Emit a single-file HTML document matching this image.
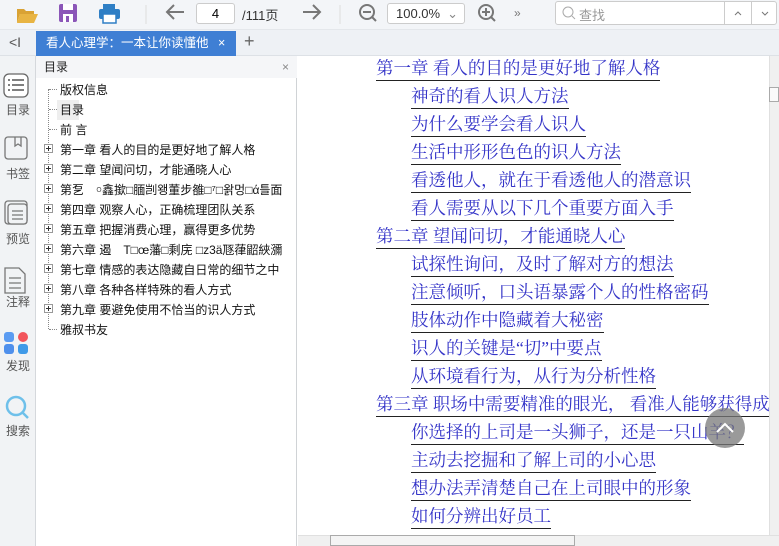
<!DOCTYPE html>
<html><head><meta charset="utf-8"><style>
*{margin:0;padding:0;box-sizing:border-box}
body{width:779px;height:546px;overflow:hidden;background:#fff;font-family:"Liberation Sans","Noto Sans CJK SC",sans-serif;position:relative}
.tb{position:absolute;left:0;top:0;width:779px;height:30px;background:#f3f5f8;border-bottom:1px solid #e4e7eb}
.tabs{position:absolute;left:0;top:30px;width:779px;height:26px;background:#eef1f5;border-bottom:1px solid #dde1e6}
.side{position:absolute;left:0;top:56px;width:36px;height:490px;background:#f1f3f5;border-right:1px solid #d5d8dc}
.toc{position:absolute;left:36px;top:56px;width:261px;height:490px;background:#fff;border-right:1px solid #d0d3d6}
.sl{position:absolute;left:0;width:36px;text-align:center;font-size:12px;color:#555}
.ti{position:absolute;left:24px;font-size:12px;color:#111;white-space:nowrap}
.pl{position:absolute;left:8px;width:9px;height:9px;border:1px solid #999;background:#fff}
.pl:before{content:"";position:absolute;left:1px;top:3px;width:5px;height:1px;background:#333}
.pl:after{content:"";position:absolute;left:3px;top:1px;width:1px;height:5px;background:#333}
.dh{position:absolute;border-top:1px dotted #888;width:8px}
.m{position:absolute;font-family:"Liberation Serif","Noto Serif CJK SC",serif;font-size:17.5px;color:#3535c8;white-space:nowrap;border-bottom:1px solid #222;line-height:22px;padding-bottom:1px}
</style></head><body>
<div class="tb">
<svg width="779" height="30" style="position:absolute;left:0;top:0">
<path d="M17 9h7l2 2h8v3H20l-3 9z" fill="#d9a234"/><path d="M20 14h18l-4 9H17z" fill="#e8b443"/>
<rect x="59" y="4" width="18" height="18" rx="2" fill="#8b56b8"/><rect x="63" y="4" width="10" height="6" fill="#fff"/><rect x="63" y="14" width="10" height="8" fill="#fff"/><rect x="66" y="16" width="3" height="6" fill="#8b56b8"/>
<rect x="103" y="4" width="12" height="5" fill="#2f7fc5"/><rect x="99" y="9" width="21" height="10" rx="2" fill="#2f7fc5"/><rect x="103" y="14" width="13" height="9" fill="#fff" stroke="#2f7fc5" stroke-width="1.5"/>
<line x1="146" y1="5" x2="146" y2="24" stroke="#ddd"/>
<path d="M184 12H168M174 5l-7 7 7 7" stroke="#777" stroke-width="2" fill="none"/>
<path d="M303 12h16M313 5l7 7-7 7" stroke="#777" stroke-width="2" fill="none"/>
<line x1="340" y1="5" x2="340" y2="24" stroke="#ddd"/>
<circle cx="367" cy="12" r="7" stroke="#777" stroke-width="2" fill="none"/><line x1="363" y1="12" x2="371" y2="12" stroke="#777" stroke-width="2"/><line x1="372" y1="17" x2="376" y2="21" stroke="#777" stroke-width="2"/>
<circle cx="486" cy="12" r="7" stroke="#777" stroke-width="2" fill="none"/><path d="M482 12h8M486 8v8" stroke="#777" stroke-width="2"/><line x1="491" y1="17" x2="495" y2="21" stroke="#777" stroke-width="2"/>
<text x="514" y="17" font-size="12" fill="#777">»</text>
</svg>
<div style="position:absolute;left:196px;top:3px;width:39px;height:21px;border:1px solid #ccc;border-radius:3px;background:#fff;font-size:13px;text-align:center;line-height:19px">4</div>
<div style="position:absolute;left:242px;top:5px;font-size:13px;color:#333">/111页</div>
<div style="position:absolute;left:387px;top:3px;width:78px;height:21px;border:1px solid #ccc;border-radius:3px;background:#fff;font-size:13px;line-height:19px;padding-left:8px;color:#333">100.0%<span style="position:absolute;right:6px;color:#888">⌄</span></div>
<div style="position:absolute;left:555px;top:1px;width:222px;height:24px;border:1px solid #ccc;border-radius:3px;background:#fff">
<svg width="222" height="22" style="position:absolute;left:0;top:0"><circle cx="12" cy="10" r="5" stroke="#aaa" fill="none"/><line x1="16" y1="14" x2="19" y2="17" stroke="#aaa"/><path d="M179 13l3-3 3 3M206 10l3 3 3-3" stroke="#777" fill="none"/></svg>
<span style="position:absolute;left:23px;top:3px;font-size:13px;color:#999">查找</span><div style="position:absolute;left:168px;top:0;width:1px;height:22px;background:#ccc"></div><div style="position:absolute;left:195px;top:0;width:1px;height:22px;background:#ccc"></div></div>
</div>
<div class="tabs">
<div style="position:absolute;left:9px;top:4px;font-size:14px;color:#555">&lt;I</div>
<div style="position:absolute;left:36px;top:1px;width:200px;height:25px;background:#3f7fd4;color:#fff;font-size:12.5px;line-height:25px;padding-left:10px;white-space:nowrap;overflow:hidden">看人心理学：一本让你读懂他人<span style="position:absolute;left:172px;top:0;width:28px;height:25px;background:#3f7fd4"></span><span style="position:absolute;left:182px">×</span></div>
<div style="position:absolute;left:244px;top:1px;font-size:18px;color:#666">+</div>
</div>
<div class="side">
<svg width="36" height="400" style="position:absolute;left:0;top:0">
<rect x="4" y="18" width="24" height="23" rx="5" fill="#fff" stroke="#666" stroke-width="1.3"/><path d="M8 24h2M12 24h12M8 29h2M12 29h12M8 34h2M12 34h12" stroke="#555" stroke-width="1.5"/>
<rect x="5" y="81" width="22" height="22" rx="3" fill="none" stroke="#777" stroke-width="1.3"/><path d="M15 81v9l3-2 3 2v-9" fill="none" stroke="#777" stroke-width="1.3"/>
<rect x="5" y="145" width="22" height="23" rx="3" fill="#f1f3f5" stroke="#777" stroke-width="1.3"/><rect x="8" y="148" width="19" height="20" rx="3" fill="#f1f3f5" stroke="#777" stroke-width="1.3"/><path d="M12 155h11M12 159h11M12 163h11" stroke="#777" stroke-width="1.3"/>
<path d="M5 212h14l6 6v19H5z" fill="none" stroke="#777" stroke-width="1.3"/><path d="M9 222h12M9 227h12M9 232h12" stroke="#777" stroke-width="1.3"/>
<rect x="4" y="276" width="10" height="10" rx="3" fill="#5b9cf2"/><circle cx="23" cy="281" r="5" fill="#f2545b"/><rect x="4" y="288" width="10" height="10" rx="3" fill="#4f90ec"/><rect x="18" y="288" width="10" height="10" rx="3" fill="#3f9ae8"/>
<circle cx="16" cy="350" r="9" fill="none" stroke="#6ec0ea" stroke-width="2.5"/><line x1="23" y1="357" x2="28" y2="362" stroke="#6ec0ea" stroke-width="2.5"/>
</svg>
<div class="sl" style="top:45px">目录</div><div class="sl" style="top:109px">书签</div><div class="sl" style="top:174px">预览</div><div class="sl" style="top:237px">注释</div><div class="sl" style="top:301px">发现</div><div class="sl" style="top:366px">搜索</div>
</div>
<div class="toc">
<div style="position:absolute;left:0;top:0;width:261px;height:22px;background:#f5f6f8;font-size:12px;line-height:22px;padding-left:8px;color:#222">目录<span style="position:absolute;right:8px;color:#888">×</span></div>
<div style="position:absolute;left:12px;top:33px;height:240px;border-left:1px dotted #888"></div>
<div style="position:absolute;left:21px;top:44px;width:22px;height:20px;background:#eeeeee"></div>
<div class="dh" style="left:13px;top:33px"></div><div class="ti" style="top:25px">版权信息</div>
<div class="dh" style="left:13px;top:53px"></div><div class="ti" style="top:45px">目录</div>
<div class="dh" style="left:13px;top:73px"></div><div class="ti" style="top:65px">前 言</div>
<div class="pl" style="top:88px"></div><div class="ti" style="top:85px">第一章 看人的目的是更好地了解人格</div>
<div class="pl" style="top:108px"></div><div class="ti" style="top:105px">第二章 望闻问切，才能通晓人心</div>
<div class="pl" style="top:128px"></div><div class="ti" style="top:125px">第乭　￮鑫撳□腼剀왱董步雒□⁷□왉멍□ά틀面</div>
<div class="pl" style="top:148px"></div><div class="ti" style="top:145px">第四章 观察人心，正确梳理团队关系</div>
<div class="pl" style="top:168px"></div><div class="ti" style="top:165px">第五章 把握消费心理，赢得更多优势</div>
<div class="pl" style="top:188px"></div><div class="ti" style="top:185px">第六章 遏　T□œ藩□剩庑 □z3ä豗葎鼦綊瀰</div>
<div class="pl" style="top:208px"></div><div class="ti" style="top:205px">第七章 情感的表达隐藏自日常的细节之中</div>
<div class="pl" style="top:228px"></div><div class="ti" style="top:225px">第八章 各种各样特殊的看人方式</div>
<div class="pl" style="top:248px"></div><div class="ti" style="top:245px">第九章 要避免使用不恰当的识人方式</div>
<div class="dh" style="left:13px;top:273px"></div><div class="ti" style="top:265px">雅叔书友</div>
</div>
<div class="m" style="left:376px;top:57px">第一章 看人的目的是更好地了解人格</div>
<div class="m" style="left:411px;top:85px">神奇的看人识人方法</div>
<div class="m" style="left:411px;top:113px">为什么要学会看人识人</div>
<div class="m" style="left:411px;top:141px">生活中形形色色的识人方法</div>
<div class="m" style="left:411px;top:169px">看透他人，就在于看透他人的潜意识</div>
<div class="m" style="left:411px;top:197px">看人需要从以下几个重要方面入手</div>
<div class="m" style="left:376px;top:225px">第二章 望闻问切，才能通晓人心</div>
<div class="m" style="left:411px;top:253px">试探性询问，及时了解对方的想法</div>
<div class="m" style="left:411px;top:281px">注意倾听，口头语暴露个人的性格密码</div>
<div class="m" style="left:411px;top:309px">肢体动作中隐藏着大秘密</div>
<div class="m" style="left:411px;top:337px">识人的关键是“切”中要点</div>
<div class="m" style="left:411px;top:365px">从环境看行为，从行为分析性格</div>
<div class="m" style="left:376px;top:393px;width:393px;overflow:hidden">第三章 职场中需要精准的眼光， 看准人能够获得成功</div>
<div class="m" style="left:411px;top:421px">你选择的上司是一头狮子，还是一只山羊？</div>
<div class="m" style="left:411px;top:449px">主动去挖掘和了解上司的小心思</div>
<div class="m" style="left:411px;top:477px">想办法弄清楚自己在上司眼中的形象</div>
<div class="m" style="left:411px;top:505px">如何分辨出好员工</div>
<div style="position:absolute;left:769px;top:56px;width:10px;height:480px;background:#f0f0f0;border-left:1px solid #e0e0e0"></div>
<div style="position:absolute;left:769px;top:87px;width:10px;height:15px;background:#fafafa;border:1px solid #aaa"></div>
<div style="position:absolute;left:298px;top:535px;width:481px;height:11px;background:#f0f0f0;border-top:1px solid #e0e0e0"></div>
<div style="position:absolute;left:330px;top:535px;width:245px;height:11px;background:#f4f4f4;border:1px solid #aaa"></div>
<div style="position:absolute;left:705px;top:408px;width:40px;height:40px;border-radius:50%;background:rgba(120,120,120,.75)"><svg width="40" height="40"><path d="M12 24l8-8 8 8" stroke="#fff" stroke-width="2" fill="none"/></svg></div>
</body></html>
